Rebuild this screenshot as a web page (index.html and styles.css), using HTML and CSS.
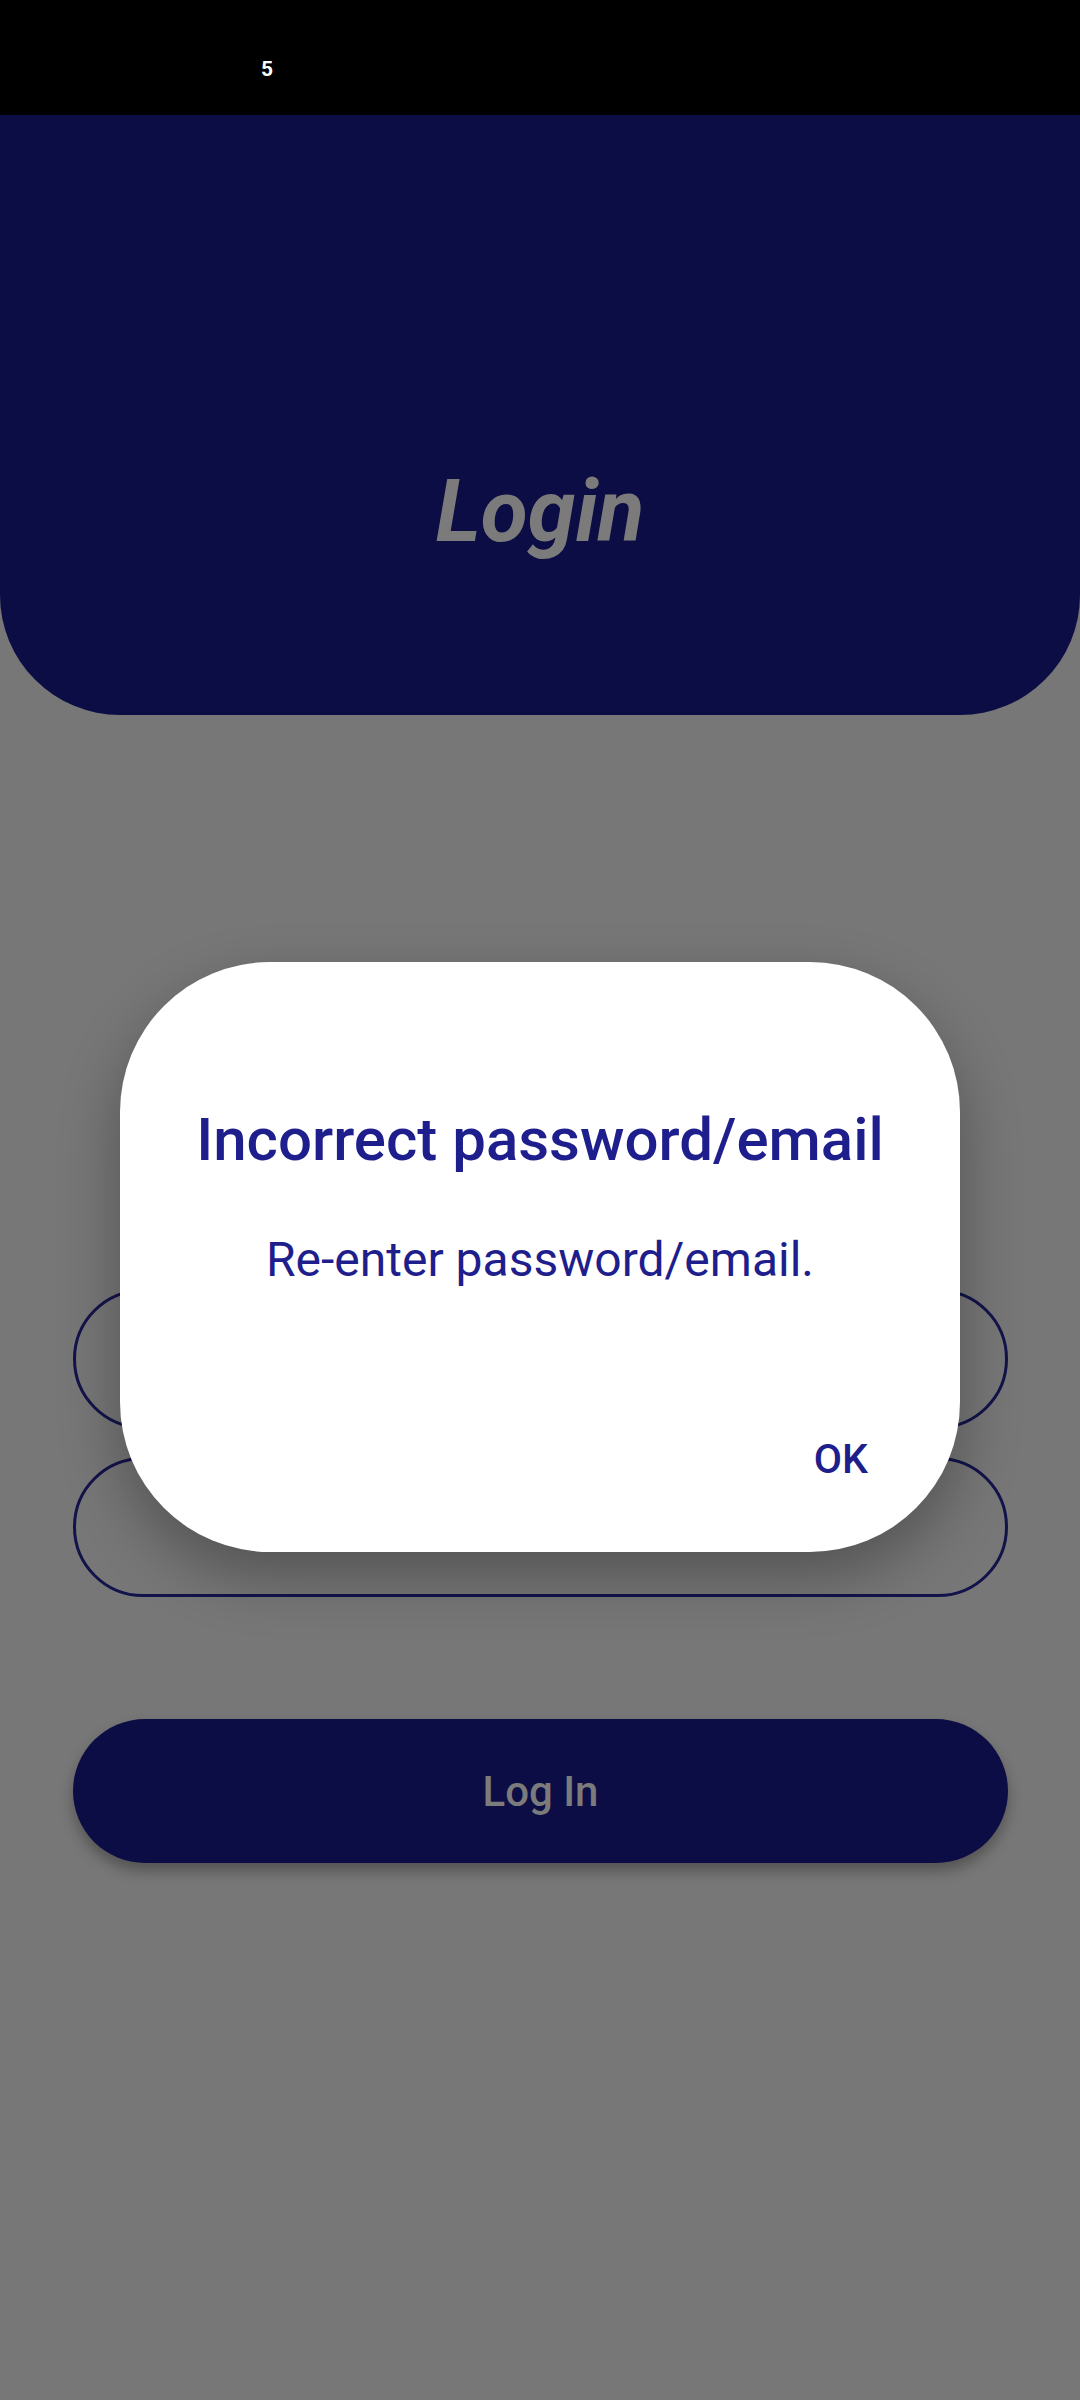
FILE: index.html
```html
<!DOCTYPE html>
<html lang="en">
<head>
<meta charset="utf-8">
<title>Login</title>
<link rel="stylesheet" href="styles.css">
</head>
<body>
<div class="screen">
  <div class="status-bar"><span class="status-num">5</span></div>
  <header class="header"><h1 class="header-title">Login</h1></header>
  <main class="form">
    <div class="field"></div>
    <div class="field"></div>
    <div class="login-btn">Log In</div>
  </main>
  <div class="dialog">
    <h2 class="dialog-title">Incorrect password/email</h2>
    <p class="dialog-text">Re-enter password/email.</p>
    <div class="dialog-actions"><span class="dialog-ok">OK</span></div>
  </div>
</div>
</body>
</html>
```
FILE: styles.css
```css
html, body {
  margin: 0;
  padding: 0;
}
body {
  background: #777777;
  font-family: Roboto, "Noto Sans", sans-serif;
}
.screen {
  position: relative;
  width: 1080px;
  height: 2400px;
  overflow: hidden;
  background: #777777;
}
.status-bar {
  height: 115px;
  background: #000000;
  box-sizing: border-box;
  padding: 57px 0 0 261px;
}
.status-num {
  display: block;
  color: #ffffff;
  font-weight: 700;
  font-size: 21px;
  line-height: normal;
}
.header {
  height: 600px;
  background: #0d0d45;
  border-radius: 0 0 120px 120px;
  box-sizing: border-box;
  padding-top: 346px;
  display: flex;
  justify-content: center;
}
.header-title {
  margin: 0;
  font-size: 86px;
  font-style: italic;
  font-weight: 700;
  line-height: normal;
  color: #7b7b7b;
}
.form {
  margin: 574px 72px 0 73px;
  display: flex;
  flex-direction: column;
}
.field {
  height: 140px;
  box-sizing: border-box;
  border: 3px solid #13134b;
  border-radius: 70px;
}
.field + .field {
  margin-top: 28px;
}
.login-btn {
  margin-top: 122px;
  height: 144px;
  border-radius: 72px;
  background: #0d0d45;
  box-shadow: 0 8px 14px rgba(0, 0, 0, 0.3);
  display: flex;
  align-items: center;
  justify-content: center;
  color: #7b7b7b;
  font-size: 42px;
  font-weight: 500;
}
.dialog {
  position: absolute;
  left: 120px;
  top: 962px;
  width: 840px;
  height: 590px;
  box-sizing: border-box;
  background: #ffffff;
  border-radius: 150px;
  box-shadow: 0 24px 60px rgba(0, 0, 0, 0.3);
  padding-top: 142px;
  color: #1e1e8c;
  display: flex;
  flex-direction: column;
}
.dialog-title {
  margin: 0;
  text-align: center;
  font-size: 60px;
  font-weight: 500;
  line-height: normal;
}
.dialog-text {
  margin: 56px 0 0;
  text-align: center;
  font-size: 48px;
  font-weight: 400;
  line-height: normal;
}
.dialog-actions {
  margin-top: 147px;
  display: flex;
  justify-content: flex-end;
  padding-right: 92px;
}
.dialog-ok {
  font-size: 41px;
  font-weight: 500;
  line-height: normal;
}
```
